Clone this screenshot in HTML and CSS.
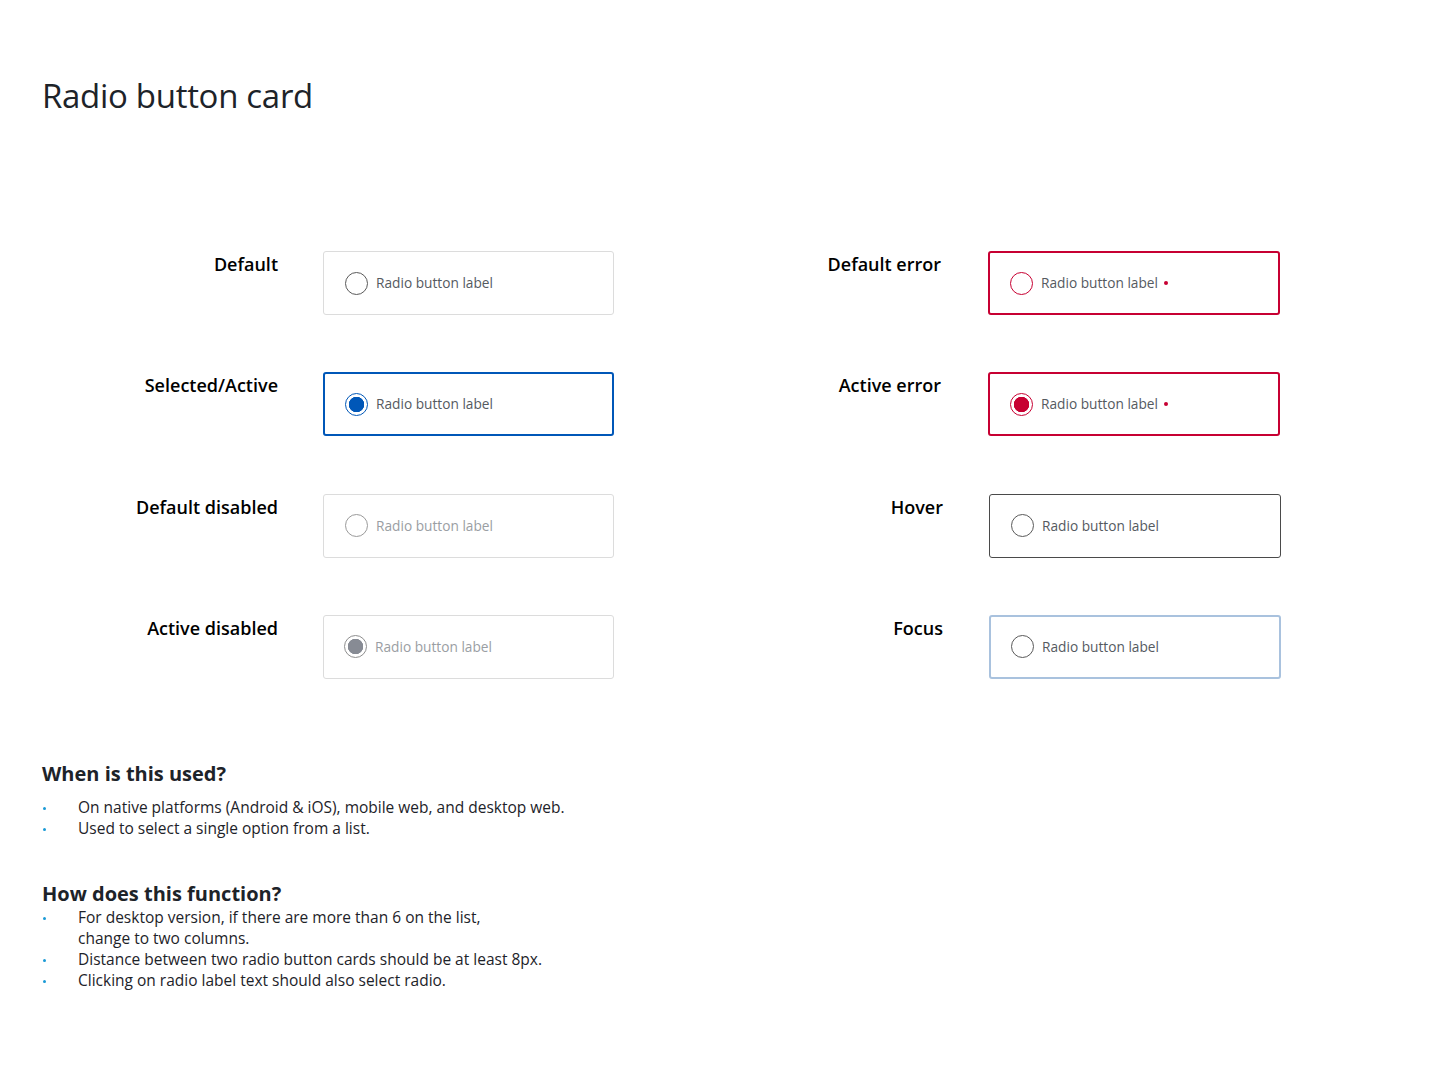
FILE: index.html
```html
<!DOCTYPE html>
<html lang="en">
<head>
<meta charset="utf-8">
<title>Radio button card</title>
<link rel="stylesheet" href="styles.css">
</head>
<body>
<main class="page">
  <h1 class="title">Radio button card</h1>

  <section class="states">
    <div class="col col-left">
      <div class="state-label">Default</div>
      <div class="card"><span class="radio"></span><span class="card-text">Radio button label</span></div>

      <div class="state-label">Selected/Active</div>
      <div class="card card-selected"><span class="radio radio-selected"></span><span class="card-text">Radio button label</span></div>

      <div class="state-label">Default disabled</div>
      <div class="card card-disabled"><span class="radio radio-disabled"></span><span class="card-text">Radio button label</span></div>

      <div class="state-label">Active disabled</div>
      <div class="card card-disabled"><span class="radio radio-disabled-active"></span><span class="card-text">Radio button label</span></div>
    </div>

    <div class="col col-right">
      <div class="state-label">Default error</div>
      <div class="card card-error"><span class="radio radio-error"></span><span class="card-text">Radio button label</span><span class="req-dot"></span></div>

      <div class="state-label">Active error</div>
      <div class="card card-error"><span class="radio radio-error-selected"></span><span class="card-text">Radio button label</span><span class="req-dot"></span></div>

      <div class="state-label shift">Hover</div>
      <div class="card card-hover shift-card"><span class="radio"></span><span class="card-text">Radio button label</span></div>

      <div class="state-label shift">Focus</div>
      <div class="card card-focus shift-card"><span class="radio"></span><span class="card-text">Radio button label</span></div>
    </div>
  </section>

  <section class="notes">
    <h2 class="notes-title first">When is this used?</h2>
    <ul class="notes-list first-list">
      <li>On native platforms (Android &amp; iOS), mobile web, and desktop web.</li>
      <li>Used to select a single option from a list.</li>
    </ul>

    <h2 class="notes-title second">How does this function?</h2>
    <ul class="notes-list">
      <li>For desktop version, if there are more than 6 on the list,<br>change to two columns.</li>
      <li>Distance between two radio button cards should be at least 8px.</li>
      <li>Clicking on radio label text should also select radio.</li>
    </ul>
  </section>
</main>
</body>
</html>
```

FILE: styles.css
```css
* { box-sizing: border-box; }

html, body {
  margin: 0;
  padding: 0;
  background: #ffffff;
}

body {
  font-family: "Open Sans", "Noto Sans", "Liberation Sans", sans-serif;
  color: #1d2329;
}

.page {
  padding: 0 0 0 42px;
  width: 1440px;
}

.title {
  margin: 0;
  padding-top: 77px;
  font-size: 33px;
  line-height: 38px;
  font-weight: 500;
  color: #1d2329;
  letter-spacing: -0.3px;
}

.states {
  display: flex;
  margin-top: 136px;
}

.col {
  display: grid;
  grid-auto-rows: 64px;
  row-gap: 57.33px;
}

.col-left {
  grid-template-columns: 236px 291px;
  column-gap: 45px;
}

.col-right {
  margin-left: 91px;
  grid-template-columns: 236px 292px;
  column-gap: 47px;
}

.state-label {
  text-align: right;
  font-size: 18px;
  line-height: 24px;
  font-weight: 600;
  color: #000000;
  padding-top: 1px;
}

.state-label.shift {
  margin-right: -2px;
}

.shift-card {
  margin-left: 1px;
  margin-right: -1px;
}

.card {
  display: flex;
  align-items: center;
  height: 64px;
  border: 1px solid #dcdcdc;
  border-radius: 3px;
  padding-left: 21px;
  background: #fff;
}

.card-selected {
  border: 2px solid #0057b8;
  padding-left: 20px;
}

.card-error {
  border: 2px solid #c70032;
  padding-left: 20px;
}

.card-hover {
  border: 1px solid #4a4a4a;
}

.card-focus {
  border: 2px solid #a9c2de;
  padding-left: 20px;
}

.radio {
  width: 23px;
  height: 23px;
  border-radius: 50%;
  border: 1px solid #5a5a5a;
  flex: 0 0 auto;
  margin-right: 8px;
  background: #fff;
}

.radio-selected {
  border: 1.5px solid #0057b8;
  background: radial-gradient(circle, #0057b8 0 7.5px, #ffffff 8px);
}

.radio-disabled {
  border-color: #9a9a9a;
}

.radio-disabled-active {
  border: 1.5px solid #8e8e8e;
  background: radial-gradient(circle, #878b94 0 7.5px, #ffffff 8px);
  margin-left: -1px;
}

.radio-error {
  border-color: #c70032;
}

.radio-error-selected {
  border: 1.5px solid #c70032;
  background: radial-gradient(circle, #c70032 0 7.5px, #ffffff 8px);
}

.card-text {
  font-size: 13.7px;
  line-height: 20px;
  color: #555a5f;
  font-weight: 400;
}

.card-disabled .card-text {
  color: #9a9ea3;
}

.req-dot {
  width: 4px;
  height: 4px;
  border-radius: 50%;
  background: #c70032;
  margin-left: 6px;
}

.notes {
  margin-top: 82px;
}

.notes-title {
  margin: 0;
  font-size: 20px;
  line-height: 26px;
  font-weight: 700;
  color: #1d2329;
}

.notes-title.second {
  margin-top: 42px;
}

.notes-list {
  list-style: none;
  margin: 0;
  padding: 0;
}

.first-list {
  margin-top: 10px;
}

.notes-list li {
  display: flex;
  font-size: 15.5px;
  line-height: 21px;
  font-weight: 400;
  color: #1d2329;
}

.notes-list li::before {
  content: "";
  flex: 0 0 auto;
  width: 3px;
  height: 3px;
  border-radius: 50%;
  background: #1a9ad6;
  margin: 10px 32px 0 1px;
}
```
